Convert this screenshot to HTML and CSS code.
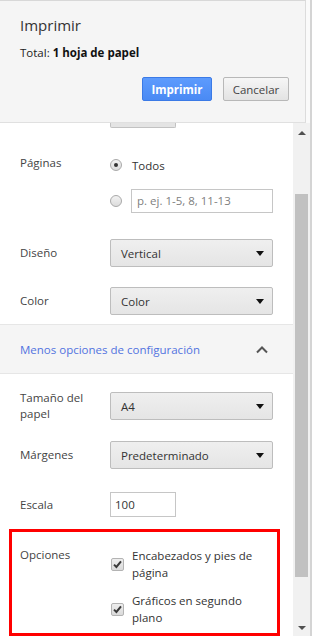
FILE: index.html
```html
<!DOCTYPE html>
<html lang="es">
<head>
<meta charset="utf-8">
<title>Imprimir</title>
<link rel="stylesheet" href="styles.css">
</head>
<body>
<div class="page">
  <div class="dialog">
    <header class="header">
      <h1 class="title">Imprimir</h1>
      <p class="total">Total: <b>1 hoja de papel</b></p>
      <div class="actions">
        <button class="btn btn-primary">Imprimir</button>
        <button class="btn btn-default">Cancelar</button>
      </div>
    </header>
    <div class="main">
      <div class="content">
        <div class="stub"></div>

        <div class="row row-pages">
          <div class="label label-top">Páginas</div>
          <div class="radios">
            <label class="opt"><span class="radio checked"></span><span>Todos</span></label>
            <label class="opt"><span class="radio"></span><span class="textbox placeholder">p. ej. 1-5, 8, 11-13</span></label>
          </div>
        </div>

        <div class="row row-layout">
          <div class="label">Diseño</div>
          <div class="select"><span>Vertical</span><span class="caret"></span></div>
        </div>

        <div class="row row-color">
          <div class="label">Color</div>
          <div class="select"><span>Color</span><span class="caret"></span></div>
        </div>

        <div class="more">
          <span class="more-text">Menos opciones de configuración</span>
          <svg class="chevron" width="14" height="9" viewBox="0 0 14 9"><path d="M2 7.5 L7 2.5 L12 7.5" fill="none" stroke="#555" stroke-width="2"/></svg>
        </div>

        <div class="row row-paper">
          <div class="label">Tamaño del papel</div>
          <div class="select"><span>A4</span><span class="caret"></span></div>
        </div>

        <div class="row row-margins">
          <div class="label">Márgenes</div>
          <div class="select"><span>Predeterminado</span><span class="caret"></span></div>
        </div>

        <div class="row row-scale">
          <div class="label">Escala</div>
          <div class="textbox small">100</div>
        </div>

        <div class="highlight">
          <div class="row-options">
            <div class="label label-opt">Opciones</div>
            <div class="checks">
              <label class="check"><span class="box"><svg width="11" height="11" viewBox="0 0 11 11"><path d="M2 5.6 L4.4 8 L9 2.4" fill="none" stroke="#3a3a3a" stroke-width="2"/></svg></span><span class="check-text">Encabezados y pies de página</span></label>
              <label class="check"><span class="box"><svg width="11" height="11" viewBox="0 0 11 11"><path d="M2 5.6 L4.4 8 L9 2.4" fill="none" stroke="#3a3a3a" stroke-width="2"/></svg></span><span class="check-text">Gráficos en segundo plano</span></label>
            </div>
          </div>
        </div>
      </div>
      <div class="scrollbar">
        <div class="sb-btn"><span class="tri-up"></span></div>
        <div class="sb-track"><div class="sb-thumb"></div></div>
        <div class="sb-btn"><span class="tri-down"></span></div>
      </div>
    </div>
  </div>
  <div class="edge"></div>
</div>
</body>
</html>
```
FILE: styles.css
```css
* { box-sizing: border-box; }
html, body { margin: 0; padding: 0; }
body {
  width: 312px;
  height: 636px;
  overflow: hidden;
  font-family: "Open Sans", "Liberation Sans", sans-serif;
  font-size: 11.5px;
  color: #333;
  background: #fff;
}
.page { display: flex; height: 636px; }
.dialog { width: 310px; display: flex; flex-direction: column; background: #fafafa; }
.edge { width: 2px; background: #d4d4d4; }

/* header */
.header {
  flex: none;
  width: 306px;
  height: 123px;
  background: #f5f5f5;
  border-top: 1px solid #d8d8d8;
  border-right: 1px solid #dcdcdc;
  border-bottom: 1px solid #e0e0e0;
  padding: 0 16px 0 20px;
  display: flex;
  flex-direction: column;
}
.title {
  margin: 14px 0 0;
  font-size: 15px;
  font-weight: normal;
  line-height: 20px;
  color: #333;
}
.total {
  margin: 9px 0 0;
  line-height: 17px;
  color: #222;
}
.total b { font-weight: 700; color: #111; }
.actions {
  margin-top: 16px;
  display: flex;
  justify-content: flex-end;
  gap: 11px;
}
.btn {
  height: 24px;
  padding: 0;
  font-family: inherit;
  font-size: 11.5px;
  border-radius: 2px;
}
.btn-primary {
  width: 70px;
  color: #fff;
  font-weight: 700;
  background: linear-gradient(#5d9bfd, #4a8af4);
  border: 1px solid #3b7ae6;
}
.btn-default {
  width: 66px;
  color: #444;
  background: linear-gradient(#f6f6f6, #e3e3e3);
  border: 1px solid #b8b8b8;
}

/* main */
.main { flex: 1; min-height: 0; overflow: hidden; display: flex; }
.content { width: 293px; background: #fff; }

.stub {
  margin-left: 110px;
  width: 66px;
  height: 5px;
  border: 1px solid #c2c2c2;
  border-top: none;
  border-radius: 0 0 2px 2px;
  background: #e4e4e4;
}

.row { display: flex; align-items: center; padding-left: 20px; }
.label { width: 90px; line-height: 16px; color: #444; padding-right: 20px; }
.label-top { align-self: flex-start; padding-top: 2px; }

.row-pages { margin-top: 25px; align-items: flex-start; }
.radios { display: flex; flex-direction: column; gap: 12px; }
.opt { display: flex; align-items: center; height: 24px; }
.radio {
  width: 12px; height: 12px;
  border-radius: 50%;
  border: 1px solid #a9a9a9;
  background: linear-gradient(#f2f2f2, #dcdcdc);
  margin-right: 10px;
  display: flex; align-items: center; justify-content: center;
}
.radio.checked::after {
  content: "";
  width: 4px; height: 4px; border-radius: 50%;
  background: #333;
}
.opt .radio + .textbox { margin-left: -1px; }
.textbox {
  height: 24px;
  width: 142px;
  border: 1px solid #c6c6c6;
  background: #fff;
  padding-left: 5px;
  line-height: 22px;
  color: #333;
}
.placeholder { color: #808080; }
.textbox.small { width: 66px; height: 25px; line-height: 23px; padding-left: 4px; }

.select {
  width: 163px;
  height: 28px;
  border: 1px solid #bdbdbd;
  border-radius: 2px;
  background: linear-gradient(#efefef, #e5e5e5);
  padding: 0 6px 0 10px;
  display: flex;
  align-items: center;
  justify-content: space-between;
  color: #333;
}
.caret {
  width: 0; height: 0;
  border-left: 4px solid transparent;
  border-right: 4px solid transparent;
  border-top: 5px solid #111;
  margin-right: 2px;
}

.row-layout { margin-top: 26px; }
.row-color { margin-top: 20px; }

.more {
  margin-top: 9px;
  height: 50px;
  border-top: 1px solid #e6e6e6;
  border-bottom: 1px solid #e6e6e6;
  background: #f5f5f5;
  display: flex;
  align-items: center;
  justify-content: space-between;
  padding: 0 24px 0 20px;
}
.more-text { color: #5273e0; }
.chevron { display: block; }

.row-paper { margin-top: 16px; }
.row-margins { margin-top: 19px; }
.row-scale { margin-top: 23px; }

.highlight {
  margin: 12px 0 0 9px;
  width: 271px;
  height: 107px;
  border: 3px solid #f00;
  padding: 15px 0 0 8px;
}
.row-options { display: flex; align-items: flex-start; }
.label-opt { width: 91px; }
.checks { display: flex; flex-direction: column; gap: 11px; }
.check { display: flex; align-items: center; }
.box {
  width: 13px; height: 13px;
  border: 1px solid #b3b3b3;
  border-radius: 2px;
  background: linear-gradient(#eeeeee, #dadada);
  margin-right: 8px;
  display: flex; align-items: center; justify-content: center;
  flex: none;
}
.box svg { display: block; }
.check-text { width: 130px; line-height: 17px; color: #333; }

/* scrollbar */
.scrollbar { width: 17px; background: #f1f1f1; display: flex; flex-direction: column; }
.sb-btn { flex: none; height: 17px; display: flex; align-items: center; justify-content: center; }
.tri-up, .tri-down {
  width: 0; height: 0;
  border-left: 4px solid transparent;
  border-right: 4px solid transparent;
}
.tri-up { border-bottom: 4px solid #505050; margin-top: 2px; }
.tri-down { border-top: 4px solid #505050; }
.sb-track { flex: 1; min-height: 0; padding: 54px 2px 0 2px; }
.sb-thumb { height: 383px; background: #c1c1c1; }
```
